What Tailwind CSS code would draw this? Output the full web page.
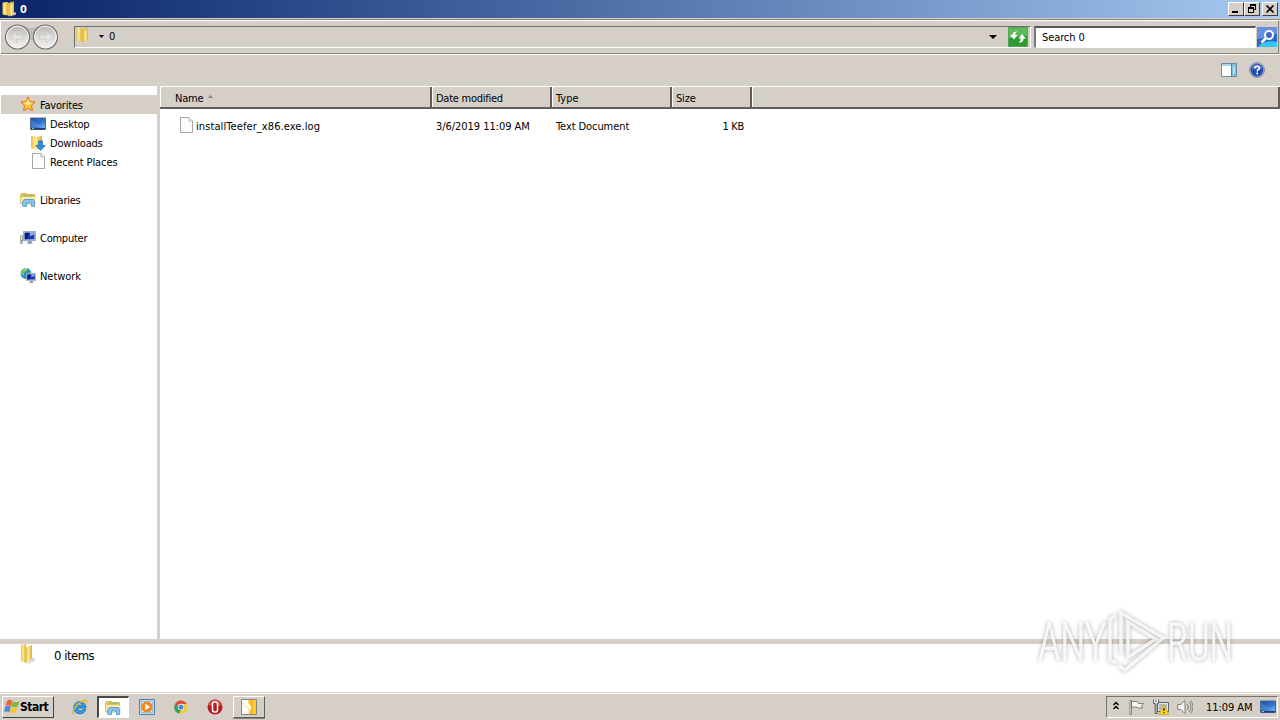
<!DOCTYPE html>
<html lang="en">
<head>
    <meta charset="UTF-8">
    <meta name="viewport" content="width=device-width, initial-scale=1.0">
    <title>0</title>
    <script src="https://cdn.jsdelivr.net/npm/@tailwindcss/browser@4"></script>
    <style>
        body {
            font-family: Tahoma, 'DejaVu Sans Condensed', 'DejaVu Sans', sans-serif;
            font-stretch: condensed;
        }
    </style>
</head>
<body class="w-[1280px] h-[720px] overflow-hidden relative flex flex-col bg-[#d5cfc7] text-black text-[11px] leading-[19px] tracking-[-0.2px] whitespace-nowrap">

    <!-- Shared icons -->
    <svg class="absolute w-0 h-0">
        <defs>
            <linearGradient id="gold" x1="0" x2="1"><stop offset="0" stop-color="#e6c043"/><stop offset=".4" stop-color="#fdeb98"/><stop offset="1" stop-color="#d9b135"/></linearGradient>
            <linearGradient id="screen" x1="0" y1="0" x2="1" y2="1"><stop offset="0" stop-color="#1c4b9d"/><stop offset=".55" stop-color="#3573ce"/><stop offset="1" stop-color="#7fc3ff"/></linearGradient>
            <linearGradient id="glass" x1="0" y1="0" x2="0" y2="1"><stop offset="0" stop-color="#b4b3b1"/><stop offset=".5" stop-color="#dbdad8"/><stop offset="1" stop-color="#f4f4f3"/></linearGradient>
        </defs>
        <symbol id="folder" viewBox="0 0 16 16">
            <path d="M11 12l3.500-1 .5 2.500-6 2z" fill="#d9d3b8"/>
            <path d="M1.500 1.500 7 1v13.500l-5.500-1z" fill="url(#gold)"/>
            <path d="M7 2 12 .5c.6 0 1 .3 1 1v10.500l-5 3.500-1-1z" fill="#e2bf4b"/>
            <path d="M8.500 4 13 2v10l-4.500 3z" fill="url(#gold)"/>
        </symbol>
        <symbol id="desktop" viewBox="0 0 16 16">
            <path d="M.5 2h15v11.500H.5z" fill="url(#screen)" stroke="#4b6793"/>
            <path d="M1 3c5 5 9 6 14 5v3H1z" fill="#63aaf0" opacity=".35"/>
            <path d="M1 12h14v1.500H1z" fill="#1d3e73"/><path d="M2 12h2v1H2z" fill="#7fd977"/>
        </symbol>
        <symbol id="page" viewBox="0 0 16 16">
            <path d="M1.500.5h8.500l3.500 3.500v11.500h-12z" fill="#fbfbfb" stroke="#9c9c9c" stroke-width=".9"/>
            <path d="M10 .5V4h3.500" fill="#ececec" stroke="#aaa" stroke-width=".8"/>
        </symbol>
        <symbol id="explorer" viewBox="0 0 16 16">
            <path d="M.7 2.500 1.700 1.500h5l1 1h7V12H.7z" fill="#eac95b" stroke="#c49f31" stroke-width=".7"/>
            <path d="M1.200 5h13.500v7H1.200z" fill="#fcebaa"/><path d="M3 3h10v1.200H3z" fill="#92bb83"/>
            <path d="M3 14.500c-.8-2-.5-6.500 1.500-7h8.500c2 .5 2 5 1.500 7h-3v-3.500H6.500v3.500z" fill="#86c6ee" stroke="#4692c7" stroke-width=".8"/>
        </symbol>
        <symbol id="monitor" viewBox="0 0 16 16">
            <path d="M.5.500h14v10.500H.5z" fill="#c5cfe0" stroke="#8f9fb8"/>
            <path d="M2 2h11v7.500H2z" fill="#173bb9"/><path d="M2 2h5L5 9.500H2z" fill="#091e80"/><path d="M8 2h5v2L8 6z" fill="#88a9ed"/>
            <path d="M6 11.500h3.500l1.500 3H4.500z" fill="#8d9cb0"/>
        </symbol>
    </svg>

    <!-- Title bar -->
    <header class="h-[18px] flex-none flex items-center pl-px pr-[2px] bg-linear-to-r from-[#0a246a] to-[#a6caf0] text-white font-bold">
        <svg class="w-4 h-4"><use href="#folder"/></svg>
        <h1 class="ml-[3px] flex-1">0</h1>
        <div class="flex">
            <button class="w-4 h-[14px] bg-[#d5cfc7] border border-t-white border-l-white border-r-[#404040] border-b-[#404040]">
                <svg class="w-[14px] h-3" viewBox="0 0 14 12"><path d="M3 8h6v2H3z"/></svg>
            </button>
            <button class="w-4 h-[14px] bg-[#d5cfc7] border border-t-white border-l-white border-r-[#404040] border-b-[#404040]">
                <svg class="w-[14px] h-3" viewBox="0 0 14 12" fill="none" stroke="#000" shape-rendering="crispEdges"><path d="M5 1.500h6M5 2.500h6M5.500 2v2M10.500 2v4.500H9M3 4.500h6M3 5.500h6M3.500 5v4.500h5V5"/></svg>
            </button>
            <button class="ml-[2px] w-4 h-[14px] bg-[#d5cfc7] border border-t-white border-l-white border-r-[#404040] border-b-[#404040]">
                <svg class="w-[14px] h-3" viewBox="0 0 14 12" stroke="#000" stroke-width="1.700"><path d="m3.500 2.500 7 7M10.500 2.500l-7 7"/></svg>
            </button>
        </div>
    </header>

    <!-- Address bar -->
    <div class="mt-px h-[36px] flex-none border-t border-[#85827d] pr-px">
        <div class="h-[35px] flex border-t border-l border-b border-white">
            <div class="h-[33px] flex-1 flex border-b border-r border-[#85827d] pl-[4px] pr-px">
                <svg class="w-[56px] h-[30px] mt-px flex-none" viewBox="0 0 56 30">
                    <path d="M13 3c6 0 9 3 14 3s9-3 14-3v16c-5 1-9-1-14-1s-9 0-14 1z" fill="#bfbcb7"/>
                    <g fill="url(#glass)" stroke="#73716f" stroke-width="1.200"><circle cx="12.500" cy="15" r="12"/><circle cx="40.500" cy="15" r="12"/></g>
                    <g fill="none" stroke="#f4f3f2" stroke-width="1"><circle cx="12.500" cy="15" r="10.800"/><circle cx="40.500" cy="15" r="10.800"/></g>
                    <path d="M5.500 15l6-6v4h7v4h-7v4zM47.500 15l-6-6v4h-7v4h7v4z" fill="#e4e3e1" stroke="#c8c7c5" stroke-width=".8"/>
                </svg>
                <div class="ml-[13px] mt-[5px] w-[957px] h-[22px] flex items-center border-t border-l border-t-[#6b6f72] border-l-[#6b6f72] border-b border-r border-b-white border-r-white">
                    <svg class="w-4 h-4 -mt-1"><use href="#folder"/></svg>
                    <svg class="ml-[8px] -mt-px w-[5px] h-[3px]" viewBox="0 0 5 3"><path d="M0 0h5L2.500 3z"/></svg>
                    <span class="ml-[5px] -mt-[2px] flex-1">0</span>
                    <svg class="mr-[11px] w-[8px] h-[4px]" viewBox="0 0 8 4"><path d="M0 0h8L4 4z"/></svg>
                    <svg class="mr-[2px] w-5 h-5" viewBox="0 0 20 20">
                        <path d="M.5.500h19v19H.5z" fill="#299b2f" stroke="#57a55d"/><path d="M1 1h18v8C13 7 7 12 1 11z" fill="#7acb70" opacity=".65"/>
                        <path d="M9.500 4.500C7.500 4 4.500 5 4.300 8H2l4 4.500L9.500 8H7.300c0-1.700.7-2.800 2.200-3.500zM10.500 15.500c2 .5 5-.5 5.200-4H18L14 7l-3.500 4.500h2.200c0 1.700-.7 3.300-2.200 4z" fill="#fff"/>
                    </svg>
                </div>
                <div class="ml-[3px] mt-[5px] w-[222px] h-[22px] pl-[6px] border-t-2 border-l-2 border-t-[#55585a] border-l-[#77797a] border-b border-r border-b-white border-r-white bg-white tracking-[-0.1px]">Search 0</div>
                <svg class="ml-[1px] mt-[6px] w-5 h-5 flex-none" viewBox="0 0 20 20">
                    <path d="M0 0h20v20H0z" fill="#2667cf"/><path d="M0 0h20v7C13 7 8 12 0 12z" fill="#8da4e8" opacity=".65"/><path d="M1 20c3-5 13-7 19-5v5z" fill="#36c5ef"/>
                    <circle cx="12" cy="8" r="4" fill="#3e65c8" stroke="#fff" stroke-width="2"/><path d="m9 11-4.500 4.500" stroke="#fff" stroke-width="2.500"/>
                </svg>
            </div>
        </div>
    </div>

    <!-- Command bar -->
    <div class="h-[31px] flex-none flex items-center justify-end gap-[12px] pr-[15px] pb-[2px]">
        <svg class="w-4 h-[14px]" viewBox="0 0 16 14"><path d="M.5.500h15v13H.5z" fill="#fff" stroke="#6c8da5"/><path d="M1 1h9v2H1z" fill="#afd3e9"/><path d="M10 1h5v12h-5z" fill="#7dc2dc"/><path d="M10.500 0v14" stroke="#568298"/><path d="M13 3v8" stroke="#e4f6fa"/></svg>
        <svg class="w-4 h-4" viewBox="0 0 16 16"><circle cx="8" cy="8" r="7.400" fill="#c3cbe0" stroke="#7585a8" stroke-width="1"/><circle cx="8" cy="8" r="6.400" fill="#244db1"/><path d="M2.500 7A5.600 5.600 0 0 1 13.500 7C10 8 6 8 2.500 7z" fill="#7690d7" opacity=".6"/><path d="M5.800 6.200c0-2.500 4.600-2.700 4.600 0 0 1.500-2.200 1.500-2.200 3.300M8.200 10.600v1.800" fill="none" stroke="#fff" stroke-width="1.600"/></svg>
    </div>

    <main class="h-[553px] flex-none flex">
        <!-- Navigation pane -->
        <nav class="w-[157px] flex-none bg-white pt-[9px]">
            <div class="ml-px h-[19px] pl-[19px] flex items-center bg-[#d5cfc7]">
                <svg class="w-4 h-4 -mt-px" viewBox="0 0 16 16"><path d="m8 .8 2.100 4.800 5.200.5-3.900 3.500 1.100 5.200L8 12.200l-4.500 2.600 1.100-5.200L.7 6.100l5.200-.5z" fill="#fbc63e" stroke="#e17a16"/><path d="m8 3 1.300 3.400 3 .4-5 2.500-3.600-2.500 3-.4z" fill="#ffed91"/></svg>
                <span class="ml-1 mt-[2px]">Favorites</span>
            </div>
            <div class="h-[19px] pl-[30px] flex items-center">
                <svg class="w-4 h-4"><use href="#desktop"/></svg>
                <span class="ml-1 mt-[2px]">Desktop</span>
            </div>
            <div class="h-[19px] pl-[30px] flex items-center">
                <svg class="w-4 h-4" viewBox="0 0 16 16"><path d="M1 1.500 6 .5v14l-5-1zM6 2l6-1v11l-6 3z" fill="url(#gold)"/><path d="M8.500 6h4v4.500h2.800l-4.800 5-4.800-5h2.800z" fill="#2b91dc" stroke="#1b65ad" stroke-width=".7"/></svg>
                <span class="ml-1 mt-[2px]">Downloads</span>
            </div>
            <div class="h-[19px] pl-[31px] flex items-center">
                <svg class="w-4 h-4 -mt-px"><use href="#page"/></svg>
                <span class="ml-[3px] mt-[2px] tracking-[-0.1px]">Recent Places</span>
            </div>
            <div class="mt-[19px] h-[19px] pl-5 flex items-center">
                <svg class="w-4 h-4"><use href="#explorer"/></svg>
                <span class="ml-1 mt-[2px] tracking-[-0.25px]">Libraries</span>
            </div>
            <div class="mt-[19px] h-[19px] pl-5 flex items-center">
                <svg class="w-4 h-4" viewBox="0 0 16 16"><use href="#monitor" x="3" y="1" width="14" height="14"/><path d="M.5 5.500h2v8h-2z" fill="#dce2da" stroke="#899388" stroke-width=".7"/><path d="M1 10h1v2H1z" fill="#5bba54"/></svg>
                <span class="ml-1 mt-[2px] tracking-[-0.25px]">Computer</span>
            </div>
            <div class="mt-[19px] h-[19px] pl-5 flex items-center">
                <svg class="w-4 h-4" viewBox="0 0 16 16"><circle cx="6" cy="5.500" r="5.400" fill="#238bc9"/><path d="M2 2c4-3 6-1 5 1L4 5v3L1 6zM8 5l3-1v3L8 9z" fill="#77c654"/><path d="m4 1 3-.8L6 2z" fill="#d8f6ff"/><use href="#monitor" x="6" y="5" width="11" height="11"/></svg>
                <span class="ml-1 mt-[2px] tracking-[-0.05px]">Network</span>
            </div>
        </nav>

        <!-- File list -->
        <section class="ml-[3px] flex-1 bg-white">
            <div class="h-[23px] flex bg-[#d5cfc7] border-t border-t-white border-b-2 border-b-[#605d59] leading-[23px]">
                <div class="w-[272px] pl-[14px] border-l border-l-white border-r-2 border-r-[#605d59] flex items-start">Name<svg class="ml-[5px] mt-[8px] w-[5px] h-[3px]" viewBox="0 0 5 3"><path d="M0 3h5L2.500 0z" fill="#85817d"/></svg></div>
                <div class="w-[120px] pl-[3px] border-l border-l-white border-r-2 border-r-[#605d59] tracking-[-0.25px]">Date modified</div>
                <div class="w-[120px] pl-[3px] border-l border-l-white border-r-2 border-r-[#605d59] tracking-normal">Type</div>
                <div class="w-[80px] pl-[3px] border-l border-l-white border-r-2 border-r-[#605d59]">Size</div>
                <div class="flex-1 border-l border-l-white border-r-2 border-r-[#605d59]"></div>
            </div>
            <div class="mt-[8px] h-[19px] flex">
                <div class="w-[276px] pl-[19px] flex"><svg class="w-4 h-4"><use href="#page"/></svg><span class="ml-px tracking-[0.09px]">installTeefer_x86.exe.log</span></div>
                <div class="w-[120px] tracking-[-0.05px]">3/6/2019 11:09 AM</div>
                <div class="w-[120px] tracking-[-0.08px]">Text Document</div>
                <div class="w-[68px] text-right tracking-[-0.3px]">1 KB</div>
            </div>
        </section>
    </main>

    <!-- Details pane -->
    <footer class="mt-[5px] h-[48px] flex-none flex bg-white text-[13px] leading-[23px]">
        <svg class="ml-5 w-[18px] h-[22px]" viewBox="0 0 18 22"><path d="m11 13 4 1.500v2.500l-8 3z" fill="#d9d8d4"/><path d="M1 1 6 0v19l-5-2z" fill="url(#gold)"/><path d="M6 3l6-2v13l-6 5z" fill="url(#gold)"/></svg>
        <span class="ml-4 tracking-[-0.5px]">0 items</span>
    </footer>

    <!-- Taskbar -->
    <div class="mt-px h-[27px] flex-none border-t border-white flex items-center pl-[2px] pr-[2px]">
        <button class="w-[52px] h-[22px] flex items-center border border-t-white border-l-white border-r-[#404040] border-b-[#404040] font-bold text-[12px] tracking-[-0.5px]">
            <svg class="ml-px w-4 h-4 flex-none" viewBox="0 0 16 16"><path d="M3 2c2-2 4-1 5.500 0L7 7.500C5 6 3 6 1.500 7z" fill="#ed6330"/><path d="M9 2.500c2 1 4 1 6.500-.5L14 7c-2 1.500-4 1.500-6.500.5z" fill="#80b63b"/><path d="M1.200 7.800c2-1.500 4-1 5.500 0l-1.500 5.500c-2-1-3-1-5 0z" fill="#458be0"/><path d="M7.300 8.500c2 1 4 1 6.200-.5L12 13c-2 1.500-4 1.500-6.200.5z" fill="#f6c331"/></svg>
            <span class="mt-px">Start</span>
        </button>
        <svg class="ml-[18px] w-4 h-4" viewBox="0 0 16 16"><path d="M14 9H5.500c.3 3.200 4.300 3.600 5.300 1.500h3C12.500 16.500 1.800 16.500 1.800 8.500S14 .8 14 9zM5.500 6.700h5.200C10.300 4 6 4 5.500 6.700z" fill="#329de0" stroke="#1b73b9" stroke-width=".9" fill-rule="evenodd"/><path d="M2.500 14.500c-4 0 1-9 7-12 5-2.500 6-1 4.500 2" fill="none" stroke="#e3b72d" stroke-width="1.400"/></svg>
        <div class="ml-[9px] w-8 h-[22px] flex items-center justify-center bg-white border-t-2 border-l-2 border-t-[#4b4946] border-l-[#4b4946] border-r border-b border-r-white border-b-white">
            <svg class="w-4 h-4 mt-px mr-[2px]"><use href="#explorer"/></svg>
        </div>
        <svg class="ml-[10px] w-4 h-4" viewBox="0 0 16 16"><path d="M.5.500h15v15H.5z" fill="#b9d9f2" stroke="#4d82b7"/><path d="M2.500 2.500h11v11h-11z" fill="#e5eef5" stroke="#85afcf" stroke-width=".7"/><circle cx="8" cy="8" r="5.600" fill="#f28717"/><path d="m6.300 4.700 5 3.300-5 3.300z" fill="#fff"/></svg>
        <svg class="ml-[19px] w-[14px] h-[14px]" viewBox="0 0 16 16"><circle cx="8" cy="8" r="7.500" fill="#f3cb32"/><path d="M1.500 4A7.500 7.500 0 0 1 14.500 4.500H8A3.500 3.500 0 0 0 5 10z" fill="#dd4b3e"/><path d="M1.500 4 5 10l3 1.500-2 4A7.500 7.500 0 0 1 1.500 4z" fill="#30a35a"/><circle cx="8" cy="8" r="3.600" fill="#fff"/><circle cx="8" cy="8" r="2.900" fill="#4788df"/></svg>
        <svg class="ml-[19px] w-4 h-4" viewBox="0 0 16 16"><circle cx="8" cy="8" r="7.500" fill="#b51b1d"/><path d="M1 6C2-1 14-1 15 6 11 8 5 8 1 6z" fill="#dd6761" opacity=".65"/><path d="M7.500 3h1a2 2 0 0 1 2 2v6a2 2 0 0 1-2 2h-1a2 2 0 0 1-2-2V5a2 2 0 0 1 2-2z" fill="#b51b1d" stroke="#fff" stroke-width="1.500"/></svg>
        <div class="ml-[10px] w-8 h-[22px] flex items-center justify-center border border-t-white border-l-white border-r-[#605d59] border-b-[#605d59] shadow-[0_1px_0_#85827d]">
            <svg class="w-4 h-4" viewBox="0 0 16 16"><path d="M.5.500h15v15H.5z" fill="#fff" stroke="#848484"/><path d="M8 1h7v14H8c-1-3 3-4 2-7S6 4 8 1z" fill="#ffba17"/><path d="M12 1h3v14h-3z" fill="#ffcc36"/><path d="M2 4c2 5 5 3 6 7v4" fill="none" stroke="#f5d578"/></svg>
        </div>

        <div class="ml-auto w-[172px] h-[22px] flex items-center border-t border-l border-t-[#77746f] border-l-[#77746f] border-b border-r border-b-white border-r-white">
            <svg class="ml-[6px] w-[6px] h-[9px] -mt-[3px]" viewBox="0 0 6 9" fill="none" stroke="#000" stroke-width="1.400"><path d="M.5 4 3 1.500 5.500 4M.5 8 3 5.500 5.500 8"/></svg>
            <svg class="ml-[10px] w-4 h-4" viewBox="0 0 16 16" fill="#f8f8f8" stroke="#696969" stroke-width=".8"><path d="M1 1.500h1.500v14H1zM2.500 2.500h6l1 2h5l-2 2.500 1 2H9l-1-1H2.500z"/></svg>
            <svg class="ml-2 w-4 h-4" viewBox="0 0 16 16"><path d="M4.500 3.500h11v9h-11z" fill="#e3e7e9" stroke="#606568"/><path d="M6 5h8v6H6z" fill="#b5babd"/><path d="M.7.500v4h1.500v10H4v-10h1.500v-4M3 .5v3" fill="#fff" stroke="#4f5356"/><path d="m11 6 4.800 9.500H6z" fill="#ffdb16" stroke="#b79b13" stroke-width=".6"/><path d="M11 9v3M11 13v1.200" stroke="#272616" stroke-width="1.300"/></svg>
            <svg class="ml-2 w-4 h-4" viewBox="0 0 16 16" fill="none" stroke="#777" stroke-width=".9"><path d="M.7 5.500h3L8 1.500v13l-4.300-4h-3z" fill="#f4f4f4"/><path d="M10 5c1.500 2 1.500 4 0 6M12 3c2.600 3 2.600 7 0 10M13.800 1.500c3 4 2.500 9 0 13"/></svg>
            <span class="ml-[13px] tracking-[-0.05px]">11:09 AM</span>
            <svg class="ml-auto mr-px w-4 h-4"><use href="#desktop"/></svg>
        </div>
    </div>

    <!-- Watermark over the desktop -->
    <svg class="absolute left-[1030px] top-[600px] w-[250px] h-[80px] drop-shadow-[0_0_2px_rgba(0,0,0,0.38)]" viewBox="0 0 250 80">
        <g fill="#fff" fill-opacity=".8" stroke="#fff" stroke-opacity=".8" stroke-width=".8" font-family="Roboto, sans-serif" font-weight="300" font-size="51">
            <text x="8" y="60" textLength="68" lengthAdjust="spacingAndGlyphs">ANY</text>
            <text x="137" y="60" textLength="66" lengthAdjust="spacingAndGlyphs">RUN</text>
        </g>
        <path d="M98 22v35l28-18zM86 16l-6 3v41l6 3M91 54V13l42 25-38 32-6-4" fill="none" stroke="#fff" stroke-opacity=".8" stroke-width="3.500"/>
    </svg>
</body>
</html>
